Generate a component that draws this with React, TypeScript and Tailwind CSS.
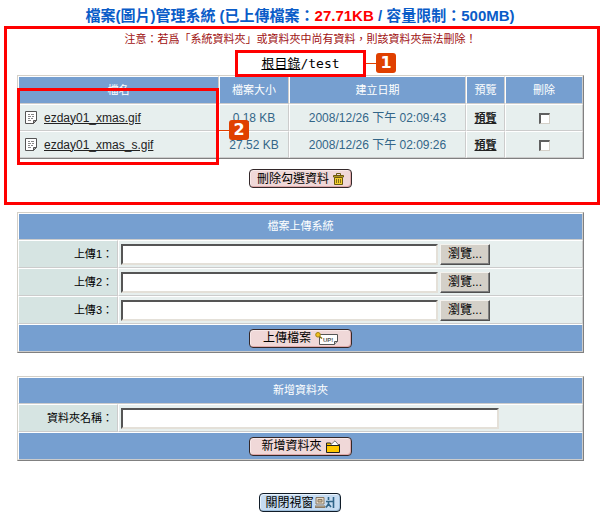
import type { ReactNode } from 'react';

type FileRow = {
    name: string;
    size: string;
    created: string;
};

const files: FileRow[] = [
    { name: 'ezday01_xmas.gif', size: '0.18 KB', created: '2008/12/26 下午 02:09:43' },
    { name: 'ezday01_xmas_s.gif', size: '27.52 KB', created: '2008/12/26 下午 02:09:26' },
];

const panel =
    'w-full table-fixed border-separate border-spacing-0 border border-t-[#d4d0c8] border-l-[#d4d0c8] border-r-[#808080] border-b-[#808080]';
const cell = 'border border-t-white border-l-white border-r-[#cccccc] border-b-[#cccccc] p-0';
const head = `${cell} bg-[#769fd0] text-[11px] font-normal text-white`;
const body = `${cell} h-[27px] bg-[#e7efee]`;
const field =
    'h-[21px] border-2 border-t-[#555555] border-l-[#555555] border-r-[#e4e0d8] border-b-[#e4e0d8] bg-white px-1 text-xs outline-none';

function DocIcon() {
    return (
        <svg viewBox="0 0 12 13" className="h-[13px] w-3 shrink-0" fill="none" stroke="#555">
            <path d="M.5 .5h11v8.5l-3 3.5h-8z" fill="#fff" />
            <path d="M8.5 12.5V9.5h3z" fill="#aaa" />
            <path d="M3 3.5h2M6 3.5h3M3 5.5h3M7 5.5h2M3 7.5h2M6 7.5h2M3 9.5h3" stroke="#888" />
        </svg>
    );
}

function TrashIcon() {
    return (
        <svg viewBox="0 0 11 12" className="h-3 w-[11px] shrink-0" fill="#f3cf2c" stroke="#6a5810">
            <path d="M3.5 2V.5h4V2" fill="none" />
            <path d="M.5 2.5h10v1.5H.5z" />
            <path d="M1.5 4.5h8v7h-8z" />
            <path d="M3.5 6v4M5.5 6v4M7.5 6v4" strokeWidth=".8" />
        </svg>
    );
}

function UploadIcon() {
    return (
        <svg viewBox="0 0 23 13" className="h-[13px] w-[23px] shrink-0" fill="none" stroke="#555">
            <path d="M4.5 2.5h18v7l-3 3h-15z" fill="#fff" />
            <path d="M19.5 12.5v-3h3" fill="#ccc" />
            <path d="M4 4l3 2.5" stroke="#806a10" strokeWidth="1.5" />
            <circle cx="3" cy="2.8" r="2.3" fill="#f0c020" stroke="#a08010" />
            <text x="8" y="10" fontSize="6" fontWeight="bold" fontFamily="Liberation Sans, sans-serif" fill="#555" stroke="none">
                UP!
            </text>
        </svg>
    );
}

function FolderIcon() {
    return (
        <svg viewBox="0 0 14 13" className="h-[13px] w-3.5 shrink-0" fill="#ffc800" stroke="#222">
            <path d="M.5 12.5v-9.5h4l1 1.5h8v8z" />
            <path d="M4 5.5L9 .8l4 4.7z" fill="#fff" stroke="#777" />
            <path d="M.5 5.5h13" />
        </svg>
    );
}

function ExitIcon() {
    return (
        <svg viewBox="0 0 20 11" className="h-[11px] w-5 shrink-0" fill="none">
            <path d="M1 .5h8v6.5H1z" fill="#e8dcc8" stroke="#8a7a66" />
            <path d="M3 2.5h4v2.5H3zM0 9h10v1.5H0z" fill="#c8b898" stroke="#8a7a66" />
            <path d="M13.5 0v3M11 4.5h5M13.5 4v3l-2.5 3.5M13.5 7l2.5 3" stroke="#2f6488" strokeWidth="1.6" />
            <path d="M18.5 0v11M16 4.5h2" stroke="#2f6488" strokeWidth="1.6" />
        </svg>
    );
}

function ImageButton({ children, icon, blue }: { children: ReactNode; icon: ReactNode; blue?: boolean }) {
    return (
        <button
            type="button"
            className={`inline-flex h-[19px] items-center justify-center rounded-[4px] border align-middle text-xs leading-none whitespace-nowrap text-black ${
                blue
                    ? 'w-[82px] gap-px border-[#101c28] bg-[#c6dcf2] shadow-[inset_1px_1px_0_#e8f2fc,inset_-1px_-1px_0_#9dbdda]'
                    : 'w-[103px] gap-1 border-[#33282a] bg-[#f0d8d8] shadow-[inset_1px_1px_0_#f8e8e8,inset_-1px_-1px_0_#e0a8a8]'
            }`}
        >
            {children}
            {icon}
        </button>
    );
}

function Marker({ n }: { n: number }) {
    return (
        <span className="flex items-center">
            <span className="h-px w-[10px] bg-[#e04000]" />
            <span className="flex h-5 w-5 items-center justify-center rounded-[3px] bg-[#e04000] font-['DejaVu_Sans',sans-serif] text-base leading-none font-bold text-white">
                {n}
            </span>
        </span>
    );
}

function FileTable() {
    return (
        <div className="relative">
            <table className={panel}>
                <colgroup>
                    <col />
                    <col className="w-[70px]" />
                    <col className="w-[177px]" />
                    <col className="w-[39px]" />
                    <col className="w-[78px]" />
                </colgroup>
                <thead>
                    <tr>
                        <th className={`${head} h-7`}>檔名</th>
                        <th className={head}>檔案大小</th>
                        <th className={head}>建立日期</th>
                        <th className={head}>預覽</th>
                        <th className={head}>刪除</th>
                    </tr>
                </thead>
                <tbody className="text-center text-xs leading-none text-[#336688]">
                    {files.map((f) => (
                        <tr key={f.name}>
                            <td className={body}>
                                <div className="flex items-center gap-[7px] pl-1.5">
                                    <DocIcon />
                                    <a href="#file" className="text-[#222222] underline">
                                        {f.name}
                                    </a>
                                </div>
                            </td>
                            <td className={body}>{f.size}</td>
                            <td className={body}>{f.created}</td>
                            <td className={body}>
                                <a href="#preview" className="text-[11px] font-bold text-[#222222] underline">
                                    預覽
                                </a>
                            </td>
                            <td className={body}>
                                <input
                                    type="checkbox"
                                    aria-label={`刪除 ${f.name}`}
                                    className="h-[11px] w-[11px] appearance-none border border-t-2 border-l-2 border-t-[#606060] border-l-[#606060] border-r-[#d4d0c8] border-b-[#d4d0c8] bg-white align-middle checked:bg-[#336688]"
                                />
                            </td>
                        </tr>
                    ))}
                </tbody>
            </table>
            {/* callout over the name column */}
            <div className="pointer-events-none absolute top-[13px] left-0 h-[77px] w-[calc(100%-365px)] border-[3px] border-[#ff0000]">
                <div className="absolute top-[29px] left-full ml-[3px]">
                    <Marker n={2} />
                </div>
            </div>
        </div>
    );
}

function UploadTable() {
    return (
        <table className={panel}>
            <colgroup>
                <col className="w-[100px]" />
                <col />
            </colgroup>
            <thead>
                <tr>
                    <th colSpan={2} className={`${head} h-[27px]`}>
                        檔案上傳系統
                    </th>
                </tr>
            </thead>
            <tbody className="text-xs leading-none">
                {[1, 2, 3].map((n) => (
                    <tr key={n}>
                        <td className={`${cell} h-7 bg-[#d6e4e2] text-right text-[11px]`}>
                            <label htmlFor={`upload-${n}`} className="pr-1">
                                上傳{n}：
                            </label>
                        </td>
                        <td className={`${cell} bg-[#e7efee]`}>
                            <div className="flex items-center gap-0.5 pl-0.5">
                                <input id={`upload-${n}`} type="text" className={`${field} w-[317px]`} />
                                <button
                                    type="button"
                                    className="h-[21px] w-[50px] border border-t-[#f4f2ee] border-r-[#505050] border-b-[#505050] border-l-[#f4f2ee] bg-[#d4d0c8] text-xs leading-none text-black shadow-[inset_-1px_-1px_0_#808080]"
                                >
                                    瀏覽...
                                </button>
                            </div>
                        </td>
                    </tr>
                ))}
                <tr>
                    <td colSpan={2} className={`${cell} h-7 bg-[#769fd0] text-center`}>
                        <ImageButton icon={<UploadIcon />}>上傳檔案</ImageButton>
                    </td>
                </tr>
            </tbody>
        </table>
    );
}

function FolderTable() {
    return (
        <table className={panel}>
            <colgroup>
                <col className="w-[100px]" />
                <col />
            </colgroup>
            <thead>
                <tr>
                    <th colSpan={2} className={`${head} h-[27px]`}>
                        新增資料夾
                    </th>
                </tr>
            </thead>
            <tbody className="text-xs leading-none">
                <tr>
                    <td className={`${cell} h-7 bg-[#d6e4e2] text-right text-[11px]`}>
                        <label htmlFor="folder" className="pr-1">
                            資料夾名稱：
                        </label>
                    </td>
                    <td className={`${cell} bg-[#e7efee]`}>
                        <div className="flex pl-0.5">
                            <input id="folder" type="text" className={`${field} w-[378px]`} />
                        </div>
                    </td>
                </tr>
                <tr>
                    <td colSpan={2} className={`${cell} h-7 bg-[#769fd0] text-center`}>
                        <ImageButton icon={<FolderIcon />}>新增資料夾</ImageButton>
                    </td>
                </tr>
            </tbody>
        </table>
    );
}

export default function App() {
    return (
        <main className="bg-white font-['Liberation_Sans','Noto_Sans_CJK_TC',sans-serif] text-black">
            <h1 className="pt-1.5 text-center text-[15px] leading-5 font-bold text-[#0a5cc8]">
                檔案(圖片)管理系統 (已上傳檔案：<span className="text-[#ff0000]">27.71KB</span> / 容量限制：500MB)
            </h1>

            <section className="ml-1 border-[3px] border-[#ff0000] pr-[13px] pb-3.5 pl-[10px]">
                <p className="text-center text-[11px] leading-[21px] text-[#a01010]">
                    注意：若爲「系統資料夾」或資料夾中尚有資料，則該資料夾無法刪除！
                </p>
                <nav className="relative z-10 mx-auto -mb-0.5 flex h-[27px] w-[131px] items-center justify-center border-[3px] border-[#ff0000] text-[13px] leading-none">
                    <a href="#root" className="underline">
                        根目錄
                    </a>
                    <span className="font-['DejaVu_Sans_Mono',monospace]">/test</span>
                    <span className="absolute top-0 left-full ml-[3px]">
                        <Marker n={1} />
                    </span>
                </nav>
                <FileTable />
                <div className="mt-2.5 flex justify-center">
                    <ImageButton icon={<TrashIcon />}>刪除勾選資料</ImageButton>
                </div>
            </section>

            <div className="mt-[7px] flex flex-col gap-[23px] pr-4 pl-[17px]">
                <UploadTable />
                <FolderTable />
            </div>

            <div className="mt-8 flex justify-center">
                <ImageButton blue icon={<ExitIcon />}>
                    關閉視窗
                </ImageButton>
            </div>
        </main>
    );
}
